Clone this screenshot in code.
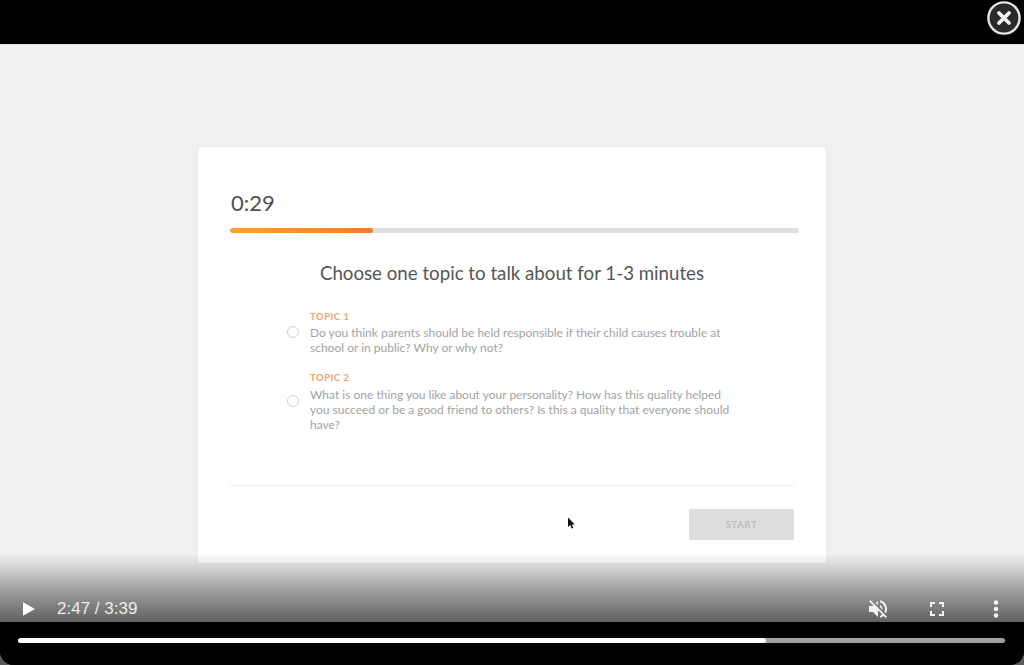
<div class="player">
  <header class="top">
    <button class="close" aria-label="Close">
      <svg width="34" height="34" viewBox="0 0 34 34"><circle cx="17" cy="17" r="15.6" fill="#2a2a2a" stroke="#e4e4e4" stroke-width="2.4"/><path d="M12 12l10 10M22 12L12 22" stroke="#f2f2f2" stroke-width="3.8" stroke-linecap="round"/></svg>
    </button>
  </header>
  <main class="stage">
    <section class="card">
      <div class="timer">0:29</div>
      <div class="track"><div class="fill"></div></div>
      <h1>Choose one topic to talk about for 1-3 minutes</h1>
      <div class="topics">
        <div class="topic t1">
          <span class="radio"></span>
          <div class="body">
            <div class="label">TOPIC 1</div>
            <p>Do you think parents should be held responsible if their child causes trouble at school or in public? Why or why not?</p>
          </div>
        </div>
        <div class="topic t2">
          <span class="radio"></span>
          <div class="body">
            <div class="label">TOPIC 2</div>
            <p>What is one thing you like about your personality? How has this quality helped you succeed or be a good friend to others? Is this a quality that everyone should have?</p>
          </div>
        </div>
      </div>
      <div class="foot">
        <button class="start">START</button>
      </div>
    </section>
    <svg class="cursor" width="9" height="13" viewBox="0 0 9 13"><path d="M1 0.5v9.5l2.2-2 1.5 3.6 1.6-.7-1.5-3.4h3z" fill="#111"/></svg>
    <div class="shade"></div>
    <div class="controls">
      <svg class="play" width="14" height="16" viewBox="0 0 14 16"><path d="M1 1.2v13.6L13 8z" fill="#fff"/></svg>
      <span class="time">2:47 / 3:39</span>
      <span class="spacer"></span>
      <svg class="mute" width="24" height="24" viewBox="0 0 24 24"><path fill="#f4f4f4" d="M16.5 12c0-1.77-1.02-3.29-2.5-4.03v2.21l2.45 2.45c.03-.2.05-.41.05-.63zm2.5 0c0 .94-.2 1.82-.54 2.64l1.51 1.51C20.63 14.91 21 13.5 21 12c0-4.28-2.99-7.86-7-8.77v2.06c2.89.86 5 3.54 5 6.71zM4.27 3L3 4.27 7.73 9H3v6h4l5 5v-6.73l4.25 4.25c-.67.52-1.42.93-2.25 1.18v2.06c1.38-.31 2.63-.95 3.69-1.81L19.73 21 21 19.73l-9-9L4.27 3zM12 4L9.91 6.09 12 8.18V4z"/></svg>
      <svg class="full" width="24" height="24" viewBox="0 0 24 24"><path fill="#f4f4f4" d="M5 5h5v2H7v3H5zM14 5h5v5h-2V7h-3zM5 14h2v3h3v2H5zM17 14h2v5h-5v-2h3z"/></svg>
      <svg class="more" width="24" height="24" viewBox="0 0 24 24"><g fill="#f4f4f4"><circle cx="12" cy="5.5" r="2.2"/><circle cx="12" cy="12" r="2.2"/><circle cx="12" cy="18.5" r="2.2"/></g></svg>
    </div>
  </main>
  <footer class="scrub">
    <div class="bar"><div class="played"></div></div>
  </footer>
</div>

<style>
  :global(body) { margin: 0; background: #5a5a5a; }
  .player {
    width: 1024px; height: 665px; display: flex; flex-direction: column;
    background: #000; overflow: hidden; border-radius: 0 0 14px 14px;
    font-family: Lato, "Open Sans", sans-serif;
  }
  .top { height: 45px; flex: none; background: #000; display: flex; justify-content: flex-end; border-bottom: 1px solid #e6e6e6; box-sizing: border-box; }
  .close { all: unset; width: 34px; height: 34px; margin: 1px 3px 0 0; }
  .close svg { display: block; }
  .stage {
    position: relative; flex: 1; background: #f0f0f0; padding: 102px 0 0 198px; box-sizing: border-box;
    overflow: hidden;
  }
  .card {
    width: 628px; height: 416px; background: #fff; border-radius: 3px; box-sizing: border-box;
    padding: 42px 32px 0 33px; color: #4a4a4a; box-shadow: 0 0 3px rgba(0,0,0,.06);
  }
  .timer { font-size: 22px; line-height: 28px; color: #505050; }
  .track { width: 569px; height: 5px; margin: 11px 0 0 -1px; background: #dfdfdf; border-radius: 3px; overflow: hidden; }
  .fill { width: 143px; height: 100%; background: linear-gradient(90deg, #fda32e, #fd7a26); border-radius: 3px; }
  h1 { margin: 28px 0 0 -1px; width: 564px; text-align: center; font-size: 18.7px; line-height: 24px; font-weight: 400; color: #555; }
  .topics { margin: 22px 0 0 56px; width: 444px; }
  .topic { display: flex; align-items: center; gap: 11px; }
  .t1 { height: 50px; }
  .t2 { margin-top: 12px; height: 64px; }
  .t2 p { margin-top: 2px; }
  .radio { width: 10px; height: 10px; border: 1px solid #d0d0d0; border-radius: 50%; flex: none; }
  .body { flex: 1; }
  .label { font-size: 9.5px; line-height: 14px; font-weight: 700; letter-spacing: .5px; color: #f4a06c; }
  p { margin: 1px 0 0; font-size: 12px; line-height: 15px; color: #a3a3a3; }
  .foot { position: absolute; top: 440px; left: 230px; width: 564px; border-top: 1px solid #ececec; display: flex; justify-content: flex-end; padding-top: 23px; }
  .start {
    all: unset; width: 105px; height: 31px; background: #dedede; border-radius: 2px; text-align: center;
    font-size: 9.5px; line-height: 31px; font-weight: 700; letter-spacing: .6px; color: #bcbcbc;
  }
  .cursor { position: absolute; left: 567px; top: 472px; }
  .shade {
    position: absolute; left: 0; right: 0; bottom: 0; height: 68px;
    background: linear-gradient(to bottom, rgba(0,0,0,0), rgba(0,0,0,.12) 20%, rgba(0,0,0,.32) 50%, rgba(0,0,0,.6));
  }
  .controls {
    position: absolute; left: 0; right: 0; bottom: 0; height: 26px;
    display: flex; align-items: center;
  }
  .play { margin-left: 22px; flex: none; }
  .time { margin-left: 21px; font: 17px/20px "Liberation Sans", Arial, sans-serif; color: #ececec; }
  .spacer { flex: 1; }
  .mute { flex: none; margin-right: 35px; }
  .full { flex: none; margin-right: 35px; }
  .more { flex: none; margin-right: 16px; }
  .scrub { height: 43px; flex: none; background: #000; padding: 16px 19px 0 18px; box-sizing: border-box; }
  .bar { height: 5px; background: #a0a0a0; border-radius: 3px; overflow: hidden; }
  .played { width: 748px; height: 100%; background: #fff; border-radius: 3px; }
</style>
